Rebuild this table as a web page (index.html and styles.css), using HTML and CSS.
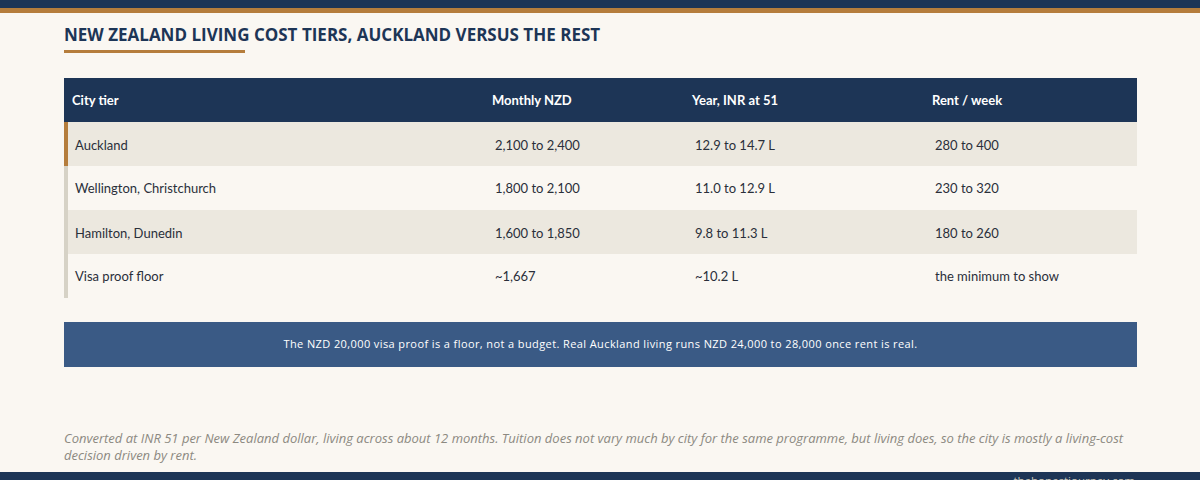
FILE: index.html
```html
<!DOCTYPE html>
<html lang="en">
<head>
<meta charset="utf-8">
<title>New Zealand living cost tiers</title>
<link rel="stylesheet" href="styles.css">
</head>
<body>
<div class="page">
  <div class="topbar"></div>
  <div class="accent"></div>
  <main class="content">
    <h1 class="title">NEW ZEALAND LIVING COST TIERS, AUCKLAND VERSUS THE REST</h1>
    <div class="title-rule"></div>
    <div class="table">
      <div class="row head">
        <div class="cell">City tier</div>
        <div class="cell">Monthly NZD</div>
        <div class="cell">Year, INR at 51</div>
        <div class="cell">Rent / week</div>
      </div>
      <div class="row alt hot">
        <div class="cell">Auckland</div>
        <div class="cell">2,100 to 2,400</div>
        <div class="cell">12.9 to 14.7 L</div>
        <div class="cell">280 to 400</div>
      </div>
      <div class="row">
        <div class="cell">Wellington, Christchurch</div>
        <div class="cell">1,800 to 2,100</div>
        <div class="cell">11.0 to 12.9 L</div>
        <div class="cell">230 to 320</div>
      </div>
      <div class="row alt">
        <div class="cell">Hamilton, Dunedin</div>
        <div class="cell">1,600 to 1,850</div>
        <div class="cell">9.8 to 11.3 L</div>
        <div class="cell">180 to 260</div>
      </div>
      <div class="row">
        <div class="cell">Visa proof floor</div>
        <div class="cell">~1,667</div>
        <div class="cell">~10.2 L</div>
        <div class="cell">the minimum to show</div>
      </div>
    </div>
    <div class="callout">The NZD 20,000 visa proof is a floor, not a budget. Real Auckland living runs NZD 24,000 to 28,000 once rent is real.</div>
    <p class="note">Converted at INR 51 per New Zealand dollar, living across about 12 months. Tuition does not vary much by city for the same programme, but living does, so the city is mostly a living-cost decision driven by rent.</p>
  </main>
  <footer class="bottombar"><span class="site">thehonestjourney.com</span></footer>
</div>
</body>
</html>
```
FILE: styles.css
```css
* { box-sizing: border-box; }
html, body { margin: 0; padding: 0; }
body {
  background: #faf7f2;
  font-family: "Open Sans", "Liberation Sans", sans-serif;
  color: #2a2f3a;
  width: 1200px;
  height: 480px;
  overflow: hidden;
}
.page {
  display: flex;
  flex-direction: column;
  height: 480px;
}
.topbar { height: 8px; background: #1d3556; flex: none; }
.accent { height: 5px; background: #b57d3c; flex: none; }
.content {
  flex: 1;
  padding: 0 63px 0 64px;
  display: flex;
  flex-direction: column;
}
.title {
  margin: 10px 0 0;
  font-size: 17px;
  line-height: 24px;
  font-weight: 700;
  color: #1d3556;
  letter-spacing: 0;
}
.title-rule {
  width: 181px;
  height: 3px;
  background: #b57d3c;
  margin-top: 3px;
}
.table {
  margin-top: 25px;
  display: flex;
  flex-direction: column;
}
.row {
  display: grid;
  grid-template-columns: 420px 200px 240px 1fr;
  height: 44px;
  align-items: center;
  border-left: 4px solid #d6d2c6;
  font-size: 13px;
  font-family: "Lato", "Open Sans", sans-serif;
}
.row .cell { padding-left: 7px; }
.row.alt { background: #ece8df; }
.row.hot { border-left-color: #b57d3c; }
.row.alt.hot .cell, .row.alt .cell { padding-top: 1px; }
.row.head {
  background: #1d3556;
  color: #ffffff;
  font-weight: 700;
  border-left: 0;
}
.row.head .cell { padding-left: 8px; }
.callout {
  margin-top: 24px;
  height: 45px;
  padding-bottom: 3px;
  background: #3a5a85;
  color: #ffffff;
  font-size: 11px;
  display: flex;
  align-items: center;
  justify-content: center;
  letter-spacing: 0.4px;
}
.note {
  margin: auto 0 8px;
  font-size: 13px;
  line-height: 17px;
  font-style: italic;
  color: #8c8981;
}
.bottombar {
  flex: none;
  height: 8px;
  background: #1d3556;
  display: flex;
  justify-content: flex-end;
  padding-right: 65px;
  overflow: hidden;
}
.site {
  font-size: 11.5px;
  line-height: 14px;
  color: #cbc7bb;
  margin-top: 2px;
  letter-spacing: 0;
}
```
